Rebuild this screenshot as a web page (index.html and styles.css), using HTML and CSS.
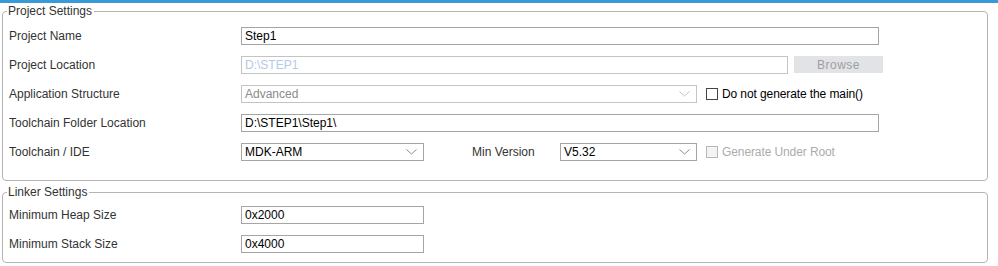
FILE: index.html
```html
<!DOCTYPE html>
<html lang="en">
<head>
    <meta charset="UTF-8">
    <title>Project Manager</title>
    <link rel="stylesheet" href="styles.css">
</head>
<body>
    <div class="top-bar"></div>

    <fieldset class="group group-project">
        <legend>Project Settings</legend>

        <div class="row">
            <label class="label">Project Name</label>
            <input class="field w-name" value="Step1">
        </div>

        <div class="row">
            <label class="label">Project Location</label>
            <input class="field w-location disabled" value="D:\STEP1" disabled>
            <button class="browse" disabled>Browse</button>
        </div>

        <div class="row">
            <label class="label">Application Structure</label>
            <div class="select w-structure disabled">
                <span>Advanced</span>
                <svg class="chevron" width="11" height="6" viewBox="0 0 11 6"><polyline points="0.5,0.5 5.5,5 10.5,0.5"/></svg>
            </div>
            <span class="check">
                <span class="box"></span>
                <span>Do not generate the main()</span>
            </span>
        </div>

        <div class="row">
            <label class="label">Toolchain Folder Location</label>
            <input class="field w-name" value="D:\STEP1\Step1\">
        </div>

        <div class="row">
            <label class="label">Toolchain / IDE</label>
            <div class="select w-small">
                <span>MDK-ARM</span>
                <svg class="chevron" width="11" height="6" viewBox="0 0 11 6"><polyline points="0.5,0.5 5.5,5 10.5,0.5"/></svg>
            </div>
            <label class="label-inline">Min Version</label>
            <div class="select w-version">
                <span>V5.32</span>
                <svg class="chevron" width="11" height="6" viewBox="0 0 11 6"><polyline points="0.5,0.5 5.5,5 10.5,0.5"/></svg>
            </div>
            <span class="check disabled">
                <span class="box"></span>
                <span>Generate Under Root</span>
            </span>
        </div>
    </fieldset>

    <fieldset class="group group-linker">
        <legend>Linker Settings</legend>

        <div class="row">
            <label class="label">Minimum Heap Size</label>
            <input class="field w-small" value="0x2000">
        </div>

        <div class="row">
            <label class="label">Minimum Stack Size</label>
            <input class="field w-small" value="0x4000">
        </div>
    </fieldset>
</body>
</html>
```

FILE: styles.css
```css
body {
    margin: 0;
    background: #fff;
    font-family: "Liberation Sans", Arial, sans-serif;
    font-size: 12px;
    color: #333;
}
.top-bar {
    height: 3px;
    background: #3a9ad9;
}
.group {
    margin: 0 10px 0 2px;
    padding: 3px 0 14px 6px;
    border: 1px solid #b4b4b4;
    border-radius: 4px;
    min-width: 0;
}
.group-project {
    margin-top: 1px;
}
.group-linker {
    margin-top: 4px;
    padding-top: 1px;
    padding-bottom: 4px;
}
legend {
    padding: 0 2px 0 1px;
    margin-left: -2px;
    line-height: 14px;
    color: #333;
}
.row {
    display: flex;
    align-items: center;
    height: 29px;
}
.label {
    width: 232px;
    flex: none;
}
.label-inline {
    margin-left: 48px;
    width: 88px;
}
.field,
.select {
    box-sizing: border-box;
    height: 18px;
    border: 1px solid #a5a5a5;
    background: #fff;
    font: inherit;
    color: #000;
    padding: 0 3px;
    margin: 0;
    outline: none;
}
.field.disabled {
    color: #b3cbe6;
    border-color: #c4c4c4;
}
.select {
    display: flex;
    align-items: center;
    justify-content: space-between;
    padding-right: 6px;
}
.select.disabled {
    color: #8a8a8a;
    border-color: #c4c4c4;
}
.chevron {
    fill: none;
    stroke: #8d8d8d;
    stroke-width: 1;
}
.select.disabled .chevron {
    stroke: #c0c0c0;
}
.w-name { width: 638px; }
.w-location { width: 547px; }
.w-structure { width: 456px; }
.w-small { width: 183px; }
.w-version { width: 137px; }
.browse {
    margin-left: 6px;
    width: 89px;
    height: 17px;
    border: none;
    background: #e1e3e6;
    color: #a0a0a0;
    font: inherit;
    letter-spacing: 0.5px;
    padding: 0;
}
.check {
    display: flex;
    align-items: center;
    margin-left: 9px;
    color: #000;
    letter-spacing: -0.1px;
}
.check .box {
    box-sizing: border-box;
    width: 12px;
    height: 12px;
    border: 1px solid #444;
    margin-right: 4px;
}
.check.disabled {
    color: #acacac;
}
.check.disabled .box {
    border-color: #b8b8b8;
    background: #f4f4f4;
}
```
